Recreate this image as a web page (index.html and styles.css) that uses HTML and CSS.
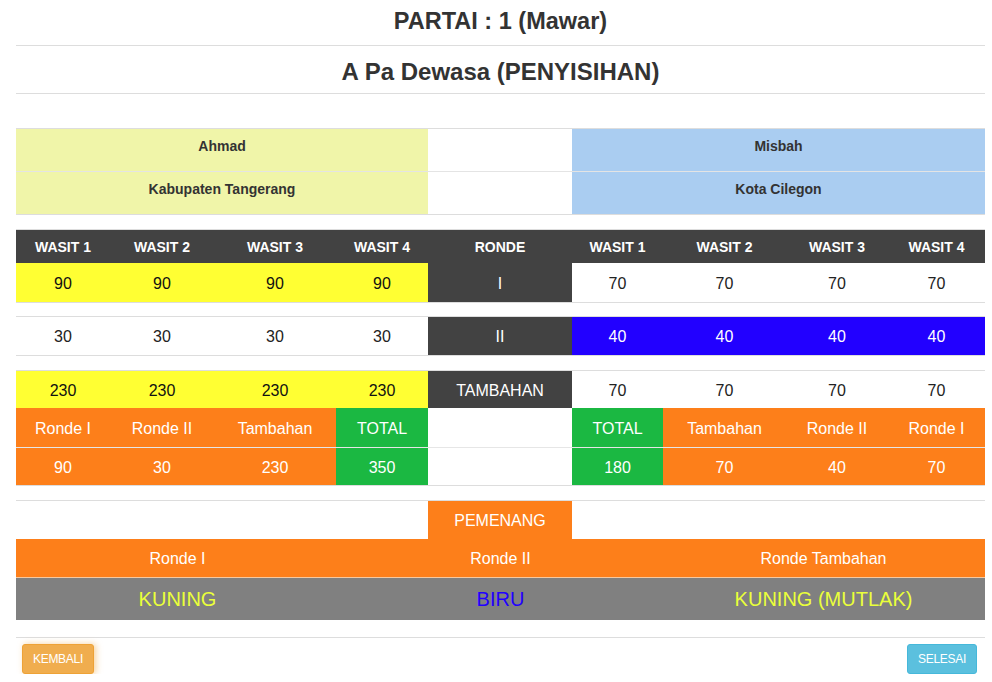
FILE: index.html
```html
<!DOCTYPE html>
<html>
<head>
<meta charset="utf-8">
<title>Partai</title>
<link rel="stylesheet" href="styles.css">
</head>
<body>
<div class="page">
  <h1 class="title t1">PARTAI : 1 (Mawar)</h1>
  <h2 class="title t2">A Pa Dewasa (PENYISIHAN)</h2>

  <div class="names">
    <div class="nrow">
      <div class="nc yel">Ahmad</div><div class="nc"></div><div class="nc blu">Misbah</div>
    </div>
    <div class="nrow sep">
      <div class="nc yel">Kabupaten Tangerang</div><div class="nc"></div><div class="nc blu">Kota Cilegon</div>
    </div>
  </div>

  <div class="group g1">
    <div class="row head">
      <div class="c">WASIT 1</div><div class="c">WASIT 2</div><div class="c">WASIT 3</div><div class="c">WASIT 4</div>
      <div class="c">RONDE</div>
      <div class="c">WASIT 1</div><div class="c">WASIT 2</div><div class="c">WASIT 3</div><div class="c">WASIT 4</div>
    </div>
    <div class="row h39">
      <div class="c yellow">90</div><div class="c yellow">90</div><div class="c yellow">90</div><div class="c yellow">90</div>
      <div class="c dark">I</div>
      <div class="c">70</div><div class="c">70</div><div class="c">70</div><div class="c">70</div>
    </div>
  </div>

  <div class="group g2">
    <div class="row h38">
      <div class="c">30</div><div class="c">30</div><div class="c">30</div><div class="c">30</div>
      <div class="c dark">II</div>
      <div class="c blue">40</div><div class="c blue">40</div><div class="c blue">40</div><div class="c blue">40</div>
    </div>
  </div>

  <div class="group g3">
    <div class="row h37">
      <div class="c yellow">230</div><div class="c yellow">230</div><div class="c yellow">230</div><div class="c yellow">230</div>
      <div class="c dark">TAMBAHAN</div>
      <div class="c">70</div><div class="c">70</div><div class="c">70</div><div class="c">70</div>
    </div>
    <div class="row h39">
      <div class="c orange">Ronde I</div><div class="c orange">Ronde II</div><div class="c orange">Tambahan</div><div class="c green">TOTAL</div>
      <div class="c"></div>
      <div class="c green">TOTAL</div><div class="c orange">Tambahan</div><div class="c orange">Ronde II</div><div class="c orange">Ronde I</div>
    </div>
    <div class="row h37 sep">
      <div class="c orange">90</div><div class="c orange">30</div><div class="c orange">230</div><div class="c green">350</div>
      <div class="c"></div>
      <div class="c green">180</div><div class="c orange">70</div><div class="c orange">40</div><div class="c orange">70</div>
    </div>
  </div>

  <div class="winner">
    <div class="row h38">
      <div class="c"></div><div class="c"></div><div class="c"></div><div class="c"></div>
      <div class="c orange">PEMENANG</div>
      <div class="c"></div><div class="c"></div><div class="c"></div><div class="c"></div>
    </div>
    <div class="trio labels">
      <div class="tc">Ronde I</div><div class="tc">Ronde II</div><div class="tc">Ronde Tambahan</div>
    </div>
    <div class="trio results">
      <div class="tc kuning">KUNING</div><div class="tc biru">BIRU</div><div class="tc kuning">KUNING (MUTLAK)</div>
    </div>
  </div>

  <div class="footer">
    <button class="btn btn-warning" type="button">KEMBALI</button>
    <button class="btn btn-info" type="button">SELESAI</button>
  </div>
</div>
</body>
</html>
```

FILE: styles.css
```css
* { box-sizing: border-box; }

body {
  margin: 0;
  background: #fff;
  color: #333;
  font-family: "Liberation Sans", Arial, Helvetica, sans-serif;
}

.page {
  width: 969px;
  margin-left: 16px;
}

.title {
  margin: 0;
  text-align: center;
  font-weight: bold;
  border-bottom: 1px solid #ddd;
  color: #333;
}

.t1 {
  font-size: 23.5px;
  height: 46px;
  line-height: 43px;
}

.t2 {
  font-size: 24px;
  height: 48px;
  line-height: 51px;
}

/* names */
.names {
  margin-top: 34px;
  border-top: 1px solid #ddd;
  border-bottom: 1px solid #ddd;
}

.nrow {
  display: grid;
  grid-template-columns: 412px 144px 413px;
  height: 42px;
}

.nrow.sep {
  height: 43px;
  border-top: 1px solid #e4e4e4;
}

.nc {
  text-align: center;
  font-size: 14px;
  font-weight: bold;
  line-height: 20px;
  padding-top: 7px;
  color: #333;
}

.nc.yel { background: #f0f5a9; }
.nc.blu { background: #aacdf1; }

/* score rows */
.group {
  border-top: 1px solid #ddd;
  border-bottom: 1px solid #ddd;
}

.g1 { margin-top: 14px; }
.g2 { margin-top: 13px; }
.g3 { margin-top: 14px; }

.row {
  display: grid;
  grid-template-columns: 94px 104px 122px 92px 144px 91px 123px 102px 97px;
}

.row.sep { border-top: 1px solid #e6e6e6; }

.head {
  height: 33px;
  background: #424242;
}

.head .c {
  color: #fff;
  font-size: 14px;
  font-weight: bold;
  padding-top: 0;
}

.h37 { height: 37px; }
.h38 { height: 38px; }
.h39 { height: 39px; }
.row.sep.h37 { height: 38px; }

.c {
  display: flex;
  align-items: center;
  justify-content: center;
  font-size: 16px;
  color: #222;
  padding-top: 2px;
}

.yellow { background: #ffff33; color: #111; }
.dark { background: #424242; color: #fff; }
.blue { background: #2200ff; color: #fff; }
.orange { background: #fd7f1a; color: #fff; }
.green { background: #1bb842; color: #fff; }

/* winner */
.winner {
  margin-top: 14px;
  border-top: 1px solid #ddd;
}

.winner .orange { color: #fff; }

.trio {
  display: grid;
  grid-template-columns: 1fr 1fr 1fr;
}

.tc {
  display: flex;
  align-items: center;
  justify-content: center;
}

.labels {
  height: 39px;
  background: #fd7f1a;
  border-bottom: 1px solid #f6c9a0;
}

.labels .tc {
  color: #fff;
  font-size: 16px;
  padding-top: 2px;
}

.results {
  height: 42px;
  background: #808080;
}

.results .tc {
  font-size: 20px;
  padding-top: 1px;
}

.kuning { color: #eaff3a; }
.biru { color: #2200ff; }

/* footer */
.footer {
  margin-top: 17px;
  border-top: 1px solid #ddd;
  padding: 6px 8px 0 6px;
  display: flex;
  justify-content: space-between;
}

.btn {
  font-family: "Liberation Sans", Arial, sans-serif;
  font-size: 12px;
  line-height: 18px;
  padding: 5px 10px;
  border-radius: 3px;
  color: #fff;
  cursor: pointer;
  height: 30px;
  letter-spacing: -0.3px;
}

.btn-warning {
  background: #f0ad4e;
  border: 1px solid #eea236;
  box-shadow: 2px 0 6px rgba(240, 173, 78, 0.55);
}

.btn-info {
  background: #5bc0de;
  border: 1px solid #46b8da;
}
```
